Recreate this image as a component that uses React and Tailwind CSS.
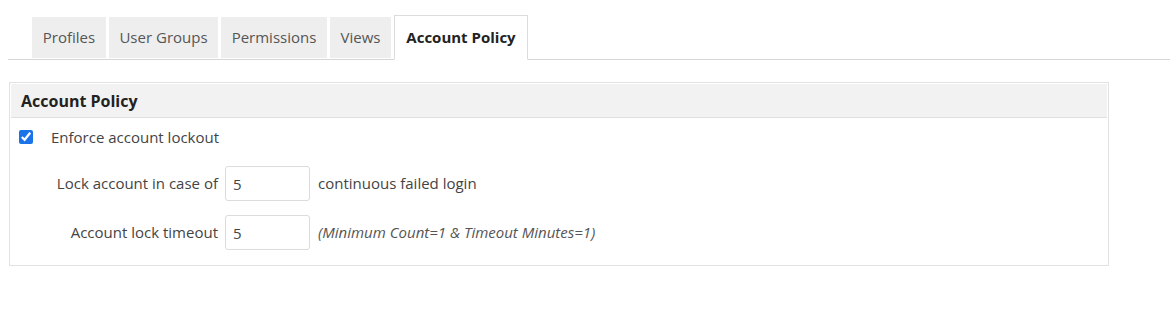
const tabs = [
  { label: 'Profiles', width: 'w-[74px]' },
  { label: 'User Groups', width: 'w-[109px]' },
  { label: 'Permissions', width: 'w-[106px]' },
  { label: 'Views', width: 'w-[61px]' },
  { label: 'Account Policy', width: 'w-[134px]' },
];

const App = () => {
  const active = 'Account Policy';

  return (
    <div className="w-[1170px] h-[309px] bg-white text-[#333] text-[15px]" style={{ fontFamily: '"Open Sans", "Liberation Sans", sans-serif' }}>
      {/* Tabs */}
      <div className="pt-[16px] pl-[8px]">
        <div className="flex items-end gap-[3px] pl-[24px] border-b border-[#d6d6d6] h-[44px]">
          {tabs.map((tab) =>
            tab.label === active ? (
              <div
                key={tab.label}
                className={`${tab.width} h-[45px] -mb-px flex items-center justify-center bg-white border border-[#dcdcdc] border-b-white font-bold text-[#222]`}
              >
                {tab.label}
              </div>
            ) : (
              <div
                key={tab.label}
                className={`${tab.width} h-[41px] mb-px flex items-center justify-center bg-[#eeeeee] text-[#555]`}
              >
                {tab.label}
              </div>
            )
          )}
        </div>
      </div>

      {/* Panel */}
      <div className="ml-[9px] mt-[22px] w-[1100px] border border-[#e2e2e2] p-px pb-[15px]">
        <div className="h-[34px] bg-[#f2f2f2] border-b border-[#e0e0e0] flex items-center pl-[10px] font-bold text-[16px] text-[#222]">
          Account Policy
        </div>

        <label className="flex items-center h-[38px] pl-[8px]">
          <input type="checkbox" defaultChecked className="w-[14px] h-[14px] accent-[#1a73e8] m-0" />
          <span className="ml-[18px] text-[#444]">Enforce account lockout</span>
        </label>

        <div className="flex flex-col gap-[14px] mt-[10px]">
          <div className="flex items-center">
            <span className="w-[207px] text-right text-[#444]">Lock account in case of</span>
            <input
              type="text"
              defaultValue="5"
              className="ml-[7px] w-[85px] h-[35px] border border-[#dcdcdc] rounded-[3px] px-[7px] text-[#444] outline-none"
            />
            <span className="ml-[8px] text-[#444]">continuous failed login</span>
          </div>
          <div className="flex items-center">
            <span className="w-[207px] text-right text-[#444]">Account lock timeout</span>
            <input
              type="text"
              defaultValue="5"
              className="ml-[7px] w-[85px] h-[35px] border border-[#dcdcdc] rounded-[3px] px-[7px] text-[#444] outline-none"
            />
            <span className="ml-[8px] italic text-[#555]">(Minimum Count=1 &amp; Timeout Minutes=1)</span>
          </div>
        </div>
      </div>
    </div>
  );
};

export default App;
